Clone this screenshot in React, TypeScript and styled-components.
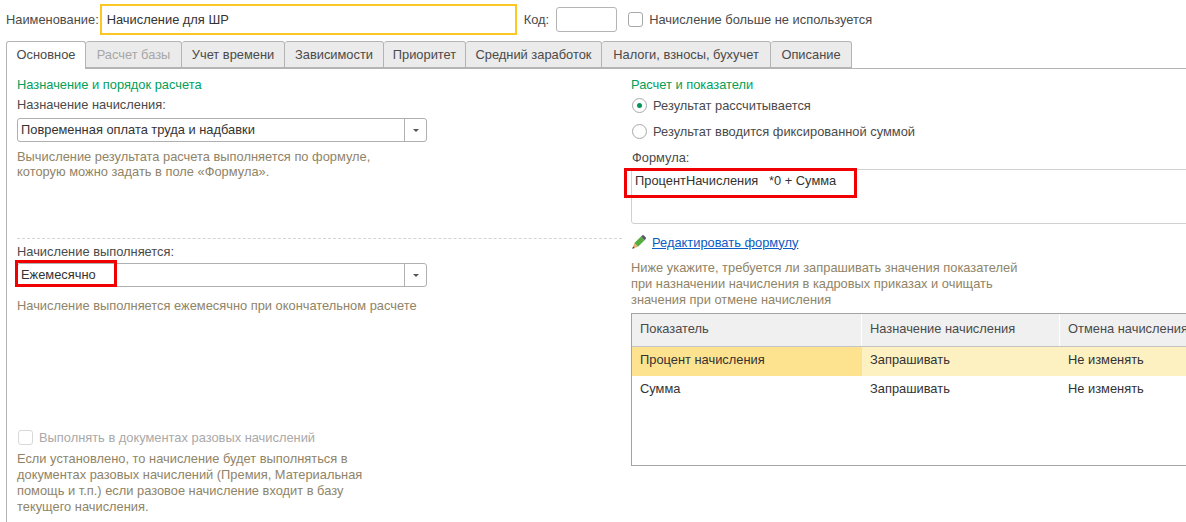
import React from 'react'
import styled, { createGlobalStyle } from 'styled-components'

const GlobalStyle = createGlobalStyle`
  html, body {
    margin: 0;
    padding: 0;
    background: #fff;
  }
  body {
    font-family: "Liberation Sans", Arial, sans-serif;
    font-size: 12.87px;
    color: #4a4a4a;
  }
`

const tabs = [
  { title: 'Основное', width: 80, active: true },
  { title: 'Расчет базы', width: 96, disabled: true },
  { title: 'Учет времени', width: 103 },
  { title: 'Зависимости', width: 99 },
  { title: 'Приоритет', width: 82 },
  { title: 'Средний заработок', width: 136 },
  { title: 'Налоги, взносы, бухучет', width: 169 },
  { title: 'Описание', width: 81 },
]

const PencilIcon = () => (
  <svg width="14" height="14" viewBox="0 0 14 14">
    <path d="M2.4 8.1 L9 1.6 L12.6 5.2 L6 11.7 Z" fill="#55ad3f" />
    <path d="M9 1.6 L10.4 0.2 Q11 -0.2 11.6 0.3 L13.9 2.6 Q14.2 3.2 13.8 3.8 L12.6 5.2 Z" fill="#565d68" />
    <path d="M2.4 8.1 L6 11.7 L0.3 13.8 Z" fill="#e0b070" />
    <path d="M1.1 11.5 L2.6 13 L0.3 13.8 Z" fill="#3c3c3c" />
  </svg>
)

const App: React.FC = () => {
  return (
    <Page>
      <GlobalStyle />
      <TopBar>
        <TopLabel>Наименование:</TopLabel>
        <NameInput>Начисление для ШР</NameInput>
        <TopLabel $ml={7}>Код:</TopLabel>
        <CodeInput />
        <Checkbox $ml={11} />
        <TopLabel $ml={6}>Начисление больше не используется</TopLabel>
      </TopBar>
      <TabRow>
        {tabs.map((tab) => (
          <Tab key={tab.title} $width={tab.width} $active={tab.active} $disabled={tab.disabled}>
            {tab.title}
          </Tab>
        ))}
      </TabRow>
      <Panel>
        <LeftColumn>
          <GroupTitle>Назначение и порядок расчета</GroupTitle>
          <FieldLabel $mt={4}>Назначение начисления:</FieldLabel>
          <Select $mt={5}>
            <SelectValue>Повременная оплата труда и надбавки</SelectValue>
            <SelectButton>
              <Arrow />
            </SelectButton>
          </Select>
          <Hint $mt={7} $lh={15}>
            Вычисление результата расчета выполняется по формуле,
            <br />
            которую можно задать в поле «Формула».
          </Hint>
          <Divider />
          <FieldLabel $mt={5}>Начисление выполняется:</FieldLabel>
          <Select $mt={3}>
            <SelectValue>Ежемесячно</SelectValue>
            <SelectButton>
              <Arrow />
            </SelectButton>
            <RedFrame $left={-3} $top={-4} $width={102} $height={27} />
          </Select>
          <Hint $mt={11} $lh={15}>
            Начисление выполняется ежемесячно при окончательном расчете
          </Hint>
          <CheckRow>
            <Checkbox $disabled />
            <DisabledText>Выполнять в документах разовых начислений</DisabledText>
          </CheckRow>
          <Hint $mt={6} $lh={16}>
            Если установлено, то начисление будет выполняться в
            <br />
            документах разовых начислений (Премия, Материальная
            <br />
            помощь и т.п.) если разовое начисление входит в базу
            <br />
            текущего начисления.
          </Hint>
        </LeftColumn>
        <RightColumn>
          <GroupTitle>Расчет и показатели</GroupTitle>
          <RadioRow $mt={4}>
            <Radio $checked />
            Результат рассчитывается
          </RadioRow>
          <RadioRow $mt={10}>
            <Radio />
            Результат вводится фиксированной суммой
          </RadioRow>
          <FieldLabel $mt={11}>Формула:</FieldLabel>
          <FormulaBox>
            ПроцентНачисления&nbsp;&nbsp; *0 + Сумма
            <RedFrame $left={-8} $top={-2} $width={233} $height={30} />
          </FormulaBox>
          <LinkRow>
            <PencilIcon />
            <EditLink>Редактировать формулу</EditLink>
          </LinkRow>
          <Hint $mt={10} $lh={16}>
            Ниже укажите, требуется ли запрашивать значения показателей
            <br />
            при назначении начисления в кадровых приказах и очищать
            <br />
            значения при отмене начисления
          </Hint>
          <Table>
            <HeaderRow>
              <HeaderCell>Показатель</HeaderCell>
              <HeaderCell>Назначение начисления</HeaderCell>
              <HeaderCell>Отмена начисления</HeaderCell>
            </HeaderRow>
            <Row>
              <Cell $bg="#fde28f">Процент начисления</Cell>
              <Cell $bg="#fdf1c2">Запрашивать</Cell>
              <Cell $bg="#fdf1c2">Не изменять</Cell>
            </Row>
            <Row>
              <Cell>Сумма</Cell>
              <Cell>Запрашивать</Cell>
              <Cell>Не изменять</Cell>
            </Row>
          </Table>
        </RightColumn>
      </Panel>
    </Page>
  )
}

const Page = styled.div`
  position: relative;
  width: 1186px;
  height: 522px;
  overflow: hidden;
  background: #fff;
`

const TopBar = styled.div`
  display: flex;
  align-items: center;
  height: 41px;
  padding: 0 0 2px 6px;
  box-sizing: border-box;
`

const TopLabel = styled.span<{ $ml?: number }>`
  margin-left: ${(p) => p.$ml || 0}px;
  white-space: nowrap;
`

const NameInput = styled.div`
  width: 417px;
  height: 31px;
  margin-left: 1px;
  padding-left: 5px;
  box-sizing: border-box;
  border: 2px solid #fbc823;
  color: #333;
  line-height: 27px;
`

const CodeInput = styled.div`
  width: 61px;
  height: 25px;
  margin-left: 7px;
  box-sizing: border-box;
  border: 1px solid #b5b5b5;
  border-radius: 3px;
`

const Checkbox = styled.div<{ $ml?: number; $disabled?: boolean }>`
  width: 15px;
  height: 15px;
  margin-left: ${(p) => p.$ml || 0}px;
  flex-shrink: 0;
  box-sizing: border-box;
  border: 1px solid ${(p) => (p.$disabled ? '#d8d8d8' : '#a8a8a8')};
  border-radius: 3px;
  background: #fff;
`

const TabRow = styled.div`
  display: flex;
  height: 27px;
  padding-left: 6px;
`

const Tab = styled.div<{ $width: number; $active?: boolean; $disabled?: boolean }>`
  width: ${(p) => p.$width}px;
  height: ${(p) => (p.$active ? 28 : 27)}px;
  box-sizing: border-box;
  border: 1px solid #b4b4b4;
  border-left-width: ${(p) => (p.$active ? 1 : 0)}px;
  border-bottom: ${(p) => (p.$active ? 'none' : '1px solid #b4b4b4')};
  border-radius: 3px 3px 0 0;
  background: ${(p) => (p.$active ? '#fff' : '#ebebeb')};
  color: ${(p) => (p.$disabled ? '#a6a6a6' : '#4a4a4a')};
  text-align: center;
  line-height: 26px;
  white-space: nowrap;
  position: relative;
  z-index: ${(p) => (p.$active ? 1 : 0)};
`

const Panel = styled.div`
  display: flex;
  height: 454px;
  margin-left: 6px;
  box-sizing: border-box;
  border-top: 1px solid #b4b4b4;
  border-left: 1px solid #b4b4b4;
`

const LeftColumn = styled.div`
  flex: none;
  width: 615px;
  padding: 8px 0 0 10px;
  box-sizing: border-box;
`

const GroupTitle = styled.div`
  height: 16px;
  color: #00a05a;
  line-height: 16px;
  white-space: nowrap;
`

const FieldLabel = styled.div<{ $mt: number }>`
  height: 16px;
  margin-top: ${(p) => p.$mt}px;
  line-height: 16px;
  white-space: nowrap;
`

const RightColumn = styled.div`
  flex: none;
  width: 600px;
  padding: 8px 0 0 9px;
  box-sizing: border-box;

  ${FieldLabel} {
    padding-left: 1px;
  }
`

const Select = styled.div<{ $mt: number }>`
  position: relative;
  display: flex;
  width: 410px;
  height: 24px;
  margin-top: ${(p) => p.$mt}px;
  box-sizing: border-box;
  border: 1px solid #b0b0b0;
  border-radius: 3px;
`

const SelectValue = styled.div`
  flex: 1;
  padding-left: 3px;
  color: #333;
  line-height: 22px;
`

const SelectButton = styled.div`
  display: flex;
  align-items: center;
  justify-content: center;
  width: 21px;
  border-left: 1px solid #b0b0b0;
`

const Arrow = styled.div`
  width: 0;
  height: 0;
  border-top: 3px solid #555;
  border-left: 3px solid transparent;
  border-right: 3px solid transparent;
`

const RedFrame = styled.div<{ $left: number; $top: number; $width: number; $height: number }>`
  position: absolute;
  left: ${(p) => p.$left}px;
  top: ${(p) => p.$top}px;
  width: ${(p) => p.$width}px;
  height: ${(p) => p.$height}px;
  box-sizing: border-box;
  border: 3px solid #f00000;
`

const Hint = styled.div<{ $mt: number; $lh: number }>`
  margin-top: ${(p) => p.$mt}px;
  color: #8f8468;
  line-height: ${(p) => p.$lh}px;
  white-space: nowrap;
`

const Divider = styled.div`
  height: 0;
  margin-top: 59px;
  border-top: 1px dashed #d4d4d4;
`

const CheckRow = styled.div`
  display: flex;
  align-items: center;
  gap: 6px;
  height: 16px;
  margin-top: 116px;
  padding-left: 1px;
`

const DisabledText = styled.span`
  color: #a9a9a9;
  white-space: nowrap;
`

const RadioRow = styled.div<{ $mt: number }>`
  display: flex;
  align-items: center;
  gap: 6px;
  height: 16px;
  margin-top: ${(p) => p.$mt}px;
  padding-left: 1px;
  white-space: nowrap;
`

const Radio = styled.div<{ $checked?: boolean }>`
  display: flex;
  align-items: center;
  justify-content: center;
  width: 15px;
  height: 15px;
  box-sizing: border-box;
  border: 1px solid #a8a8a8;
  border-radius: 50%;

  &::after {
    content: '';
    display: ${(p) => (p.$checked ? 'block' : 'none')};
    width: 5px;
    height: 5px;
    border-radius: 50%;
    background: #00965a;
  }
`

const FormulaBox = styled.div`
  position: relative;
  width: 580px;
  height: 55px;
  margin-top: 3px;
  padding: 0 0 0 3px;
  box-sizing: border-box;
  border: 1px solid #d0d0d0;
  border-radius: 3px;
  color: #333;
  line-height: 22px;
  white-space: nowrap;
`

const LinkRow = styled.div`
  display: flex;
  align-items: center;
  gap: 6px;
  height: 16px;
  margin-top: 10px;
  padding-left: 1px;
`

const EditLink = styled.a`
  color: #0b5cc4;
  text-decoration: underline;
  white-space: nowrap;
`

const Table = styled.div`
  width: 600px;
  height: 153px;
  margin-top: 5px;
  box-sizing: border-box;
  border: 1px solid #a3a3a3;
`

const HeaderRow = styled.div`
  display: grid;
  grid-template-columns: 230px 198px 1fr;
  height: 33px;
  box-sizing: border-box;
  border-bottom: 1px solid #c4c4c4;
  background: #f0f0f0;
`

const HeaderCell = styled.div`
  padding-left: 8px;
  border-right: 1px solid #fff;
  line-height: 30px;
  white-space: nowrap;
`

const Row = styled.div`
  display: grid;
  grid-template-columns: 230px 198px 1fr;
  height: 29px;
`

const Cell = styled.div<{ $bg?: string }>`
  padding-left: 8px;
  background: ${(p) => p.$bg || '#fff'};
  color: #333;
  line-height: 26px;
  white-space: nowrap;
`

export default App
